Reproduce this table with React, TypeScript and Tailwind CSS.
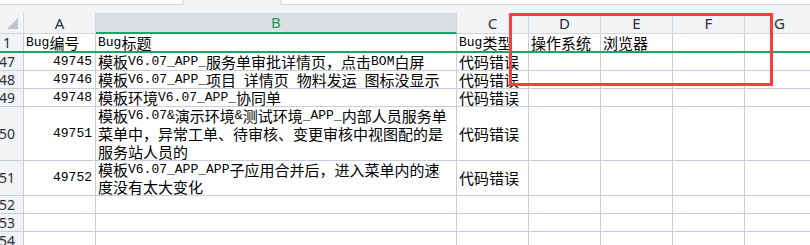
import type { ReactNode } from "react";

const LINE = "border-[#c8cddb]";
const HEAD_LINE = "border-[#d4d7de]";
const WIDTHS = [72, 361, 72, 72, 72, 72];
const LETTERS = ["A", "B", "C", "D", "E", "F"];

// SimSun-like mix: ascii runs are half width, CJK full width
function Mixed({ text }: { text: string }) {
  const parts = text.split(/([\x20-\x7e]+)/).filter(Boolean);
  return (
    <>
      {parts.map((p, i) =>
        /^[\x20-\x7e]+$/.test(p) ? (
          <span key={i} className="font-['Liberation_Mono'] text-[13px] whitespace-pre">
            {p}
          </span>
        ) : (
          <span key={i}>{p}</span>
        ),
      )}
    </>
  );
}

type RowData = {
  n: string;
  h: string;
  lineH?: string;
  a?: string;
  b?: string[];
  c?: string;
};

const rows: RowData[] = [
  { n: "47", h: "h-[18px]", a: "49745", b: ["模板V6.07_APP_服务单审批详情页，点击BOM白屏"], c: "代码错误" },
  { n: "48", h: "h-[18px]", a: "49746", b: ["模板V6.07_APP_项目 详情页 物料发运 图标没显示"], c: "代码错误" },
  { n: "49", h: "h-[18px]", a: "49748", b: ["模板环境V6.07_APP_协同单"], c: "代码错误" },
  {
    n: "50",
    h: "h-[54px]",
    lineH: "h-[18px]",
    a: "49751",
    b: [
      "模板V6.07&演示环境&测试环境_APP_内部人员服务单",
      "菜单中，异常工单、待审核、变更审核中视图配的是",
      "服务站人员的",
    ],
    c: "代码错误",
  },
  {
    n: "51",
    h: "h-[35px]",
    lineH: "h-[17px]",
    a: "49752",
    b: ["模板V6.07_APP_APP子应用合并后，进入菜单内的速", "度没有太大变化"],
    c: "代码错误",
  },
  { n: "52", h: "h-[18px]" },
  { n: "53", h: "h-[18px]" },
  { n: "54", h: "h-[18px]" },
];

function RowLabel({ n }: { n: string }) {
  return (
    <div className={`flex h-full w-[24px] shrink-0 items-center overflow-hidden border-r ${LINE} bg-[#f2f3f5]`}>
      <span className="-ml-[9px] w-[32px] shrink-0 text-center font-['Noto_Sans'] text-[14px] leading-none text-[#2b2f36]">
        {n}
      </span>
    </div>
  );
}

function Cell({ w, children, right }: { w: number; children?: ReactNode; right?: boolean }) {
  return (
    <div
      style={{ width: w }}
      className={`flex h-full shrink-0 flex-col justify-center overflow-visible border-r ${LINE} ${
        right ? "items-end pr-[3px]" : "items-start pl-[2px]"
      }`}
    >
      {children}
    </div>
  );
}

function Line({ text, h = "h-[18px]" }: { text: string; h?: string }) {
  return (
    <div className={`${h} flex items-center whitespace-nowrap leading-[18px]`}>
      <Mixed text={text} />
    </div>
  );
}

export default function App() {
  return (
    <div className="relative h-[245px] w-[810px] overflow-hidden bg-white font-['Noto_Sans_CJK_SC',sans-serif] text-[15px] text-black">
      {/* name box + formula bar edges */}
      <div className="flex h-[13px] bg-[#f3f4f6]">
        <div className="h-[5px] w-[184px] rounded-br-[4px] border-b border-r border-[#d3d6dc] bg-white" />
        <div className="ml-[96px] h-[5px] flex-1 rounded-bl-[4px] border-b border-l border-[#d3d6dc] bg-white" />
      </div>

      {/* column header */}
      <div className="flex h-[21px] bg-[#f2f3f5]">
        <div className={`flex h-full w-[24px] shrink-0 items-end border-r border-b ${HEAD_LINE} pb-[3px] pl-[7px]`}>
          <svg width="12" height="12" viewBox="0 0 12 12">
            <polygon points="11,0 11,11 0,11" fill="#bfc3ca" />
          </svg>
        </div>
        {WIDTHS.map((w, i) => (
          <div
            key={LETTERS[i]}
            style={{ width: w }}
            className={`flex h-full shrink-0 items-center justify-center border-r font-['Noto_Sans'] text-[15px] leading-none ${HEAD_LINE} ${
              i === 1
                ? "border-b-2 border-b-[#21a366] bg-[#dcdfe3] text-[#1f9d5c]"
                : "border-b text-[#2b2f36]"
            }`}
          >
            {LETTERS[i]}
          </div>
        ))}
        <div className={`flex h-full flex-1 items-center border-b ${HEAD_LINE} pl-[29px] font-['Noto_Sans'] text-[15px] leading-none text-[#2b2f36]`}>
          G
        </div>
      </div>

      {/* row 1: field names */}
      <div className="flex h-[19px] border-b-2 border-[#21a366]">
        <RowLabel n="1" />
        <Cell w={WIDTHS[0]}>
          <Line text="Bug编号" />
        </Cell>
        <Cell w={WIDTHS[1]}>
          <Line text="Bug标题" />
        </Cell>
        <Cell w={WIDTHS[2]}>
          <Line text="Bug类型" />
        </Cell>
        <Cell w={WIDTHS[3]}>
          <Line text="操作系统" />
        </Cell>
        <Cell w={WIDTHS[4]}>
          <Line text="浏览器" />
        </Cell>
        <Cell w={WIDTHS[5]} />
        <div className="flex-1" />
      </div>

      {rows.map((r) => (
        <div key={r.n} className={`flex ${r.h} border-b ${LINE}`}>
          <RowLabel n={r.n} />
          <Cell w={WIDTHS[0]} right>
            {r.a ? <Line text={r.a} /> : null}
          </Cell>
          <Cell w={WIDTHS[1]}>
            {r.b?.map((t) => (
              <Line key={t} text={t} h={r.lineH} />
            ))}
          </Cell>
          <Cell w={WIDTHS[2]}>{r.c ? <Line text={r.c} /> : null}</Cell>
          <Cell w={WIDTHS[3]} />
          <Cell w={WIDTHS[4]} />
          <Cell w={WIDTHS[5]} />
          <div className="flex-1" />
        </div>
      ))}

      {/* red highlight box */}
      <div className="absolute left-[509px] top-[13px] h-[73px] w-[264px] border-[3px] border-[#ff3b3b]" />
    </div>
  );
}
